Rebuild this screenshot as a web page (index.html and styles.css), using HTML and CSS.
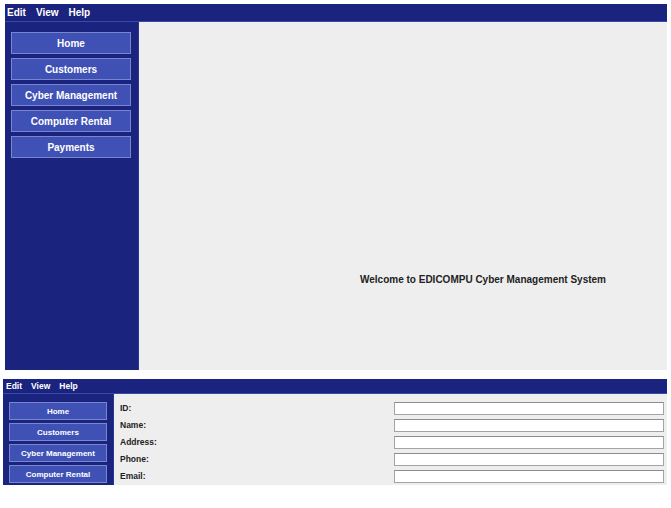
FILE: index.html
```html
<!DOCTYPE html>
<html>
<head>
<meta charset="utf-8">
<link rel="stylesheet" href="styles.css">
</head>
<body>
<div class="frame frame-large">
  <div class="menubar">
    <span class="menu-item">Edit</span>
    <span class="menu-item">View</span>
    <span class="menu-item">Help</span>
  </div>
  <div class="main">
    <div class="sidebar">
      <div class="nav-btn">Home</div>
      <div class="nav-btn">Customers</div>
      <div class="nav-btn">Cyber Management</div>
      <div class="nav-btn">Computer Rental</div>
      <div class="nav-btn">Payments</div>
    </div>
    <div class="content">
      <div class="welcome">Welcome to EDICOMPU Cyber Management System</div>
    </div>
  </div>
</div>

<div class="frame frame-small">
  <div class="menubar">
    <span class="menu-item">Edit</span>
    <span class="menu-item">View</span>
    <span class="menu-item">Help</span>
  </div>
  <div class="main">
    <div class="sidebar">
      <div class="nav-btn">Home</div>
      <div class="nav-btn">Customers</div>
      <div class="nav-btn">Cyber Management</div>
      <div class="nav-btn">Computer Rental</div>
    </div>
    <div class="content form">
      <div class="field-label">ID:</div><div class="field-input"></div>
      <div class="field-label">Name:</div><div class="field-input"></div>
      <div class="field-label">Address:</div><div class="field-input"></div>
      <div class="field-label">Phone:</div><div class="field-input"></div>
      <div class="field-label">Email:</div><div class="field-input"></div>
    </div>
  </div>
</div>
</body>
</html>
```

FILE: styles.css
```css
html, body {
  margin: 0;
  padding: 0;
  background: #ffffff;
}
body {
  font-family: "Liberation Sans", Arial, sans-serif;
  font-weight: bold;
  color: #ffffff;
  padding-top: 4px;
}
.frame {
  display: flex;
  flex-direction: column;
  overflow: hidden;
}
.menubar {
  display: flex;
  align-items: center;
  background: #1a237e;
  border-bottom: 1px solid #3949ab;
  box-sizing: border-box;
}
.main {
  display: flex;
}
.sidebar {
  display: flex;
  flex-direction: column;
  background: #1a237e;
  border-right: 1px solid #283593;
  box-sizing: border-box;
}
.nav-btn {
  display: flex;
  align-items: center;
  justify-content: center;
  background: #3f51b5;
  border: 1px solid #7986cb;
  box-sizing: border-box;
  color: #ffffff;
}
.content {
  flex: 1;
  background: #eeeeee;
  color: #222222;
}

/* large frame */
.frame-large {
  margin-left: 5px;
  width: 662px;
}
.frame-large .menubar {
  height: 18px;
  padding-left: 2px;
  gap: 10px;
  font-size: 10px;
}
.frame-large .main {
  height: 348px;
}
.frame-large .sidebar {
  width: 134px;
  padding: 10px 0 0 6px;
  gap: 4px;
}
.frame-large .nav-btn {
  width: 120px;
  height: 22px;
  font-size: 10px;
}
.frame-large .content {
  padding: 251px 0 0 221px;
}
.welcome {
  font-size: 10px;
  line-height: 13px;
}

/* small frame */
.frame-small {
  margin-top: 9px;
  margin-left: 3px;
  width: 664px;
  height: 106px;
}
.frame-small .menubar {
  height: 15px;
  padding-left: 3px;
  gap: 9px;
  font-size: 8.5px;
}
.frame-small .main {
  height: 91px;
}
.frame-small .sidebar {
  width: 111px;
  padding: 8px 0 0 6px;
  gap: 3px;
}
.frame-small .nav-btn {
  width: 98px;
  height: 18px;
  font-size: 8px;
}
.form {
  display: grid;
  grid-template-columns: 274px 270px;
  grid-auto-rows: 13px;
  row-gap: 4px;
  padding: 8px 0 0 6px;
  align-content: start;
}
.field-label {
  font-size: 8.5px;
  line-height: 13px;
  color: #222222;
}
.field-input {
  background: #ffffff;
  border: 1px solid #a0a4a8;
  border-top-color: #8a8e92;
  box-sizing: border-box;
}
```
